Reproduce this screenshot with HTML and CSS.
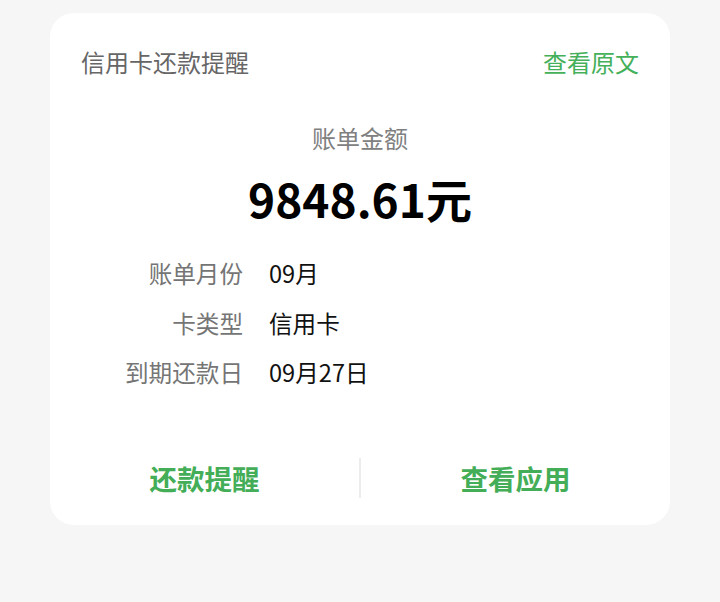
FILE: index.html
```html
<!DOCTYPE html>
<html lang="zh">
<head>
<meta charset="utf-8">
<link rel="stylesheet" href="styles.css">
</head>
<body>
<div class="card">
  <div class="header">
    <span class="title">信用卡还款提醒</span>
    <span class="link">查看原文</span>
  </div>
  <div class="sub">账单金额</div>
  <div class="amount">9848.61元</div>
  <div class="rows">
    <span class="label">账单月份</span><span class="value">09月</span>
    <span class="label">卡类型</span><span class="value">信用卡</span>
    <span class="label">到期还款日</span><span class="value">09月27日</span>
  </div>
  <div class="actions">
    <div class="btn">还款提醒</div>
    <div class="divider"></div>
    <div class="btn">查看应用</div>
  </div>
</div>
</body>
</html>
```

FILE: styles.css
```css
html, body {
  margin: 0;
  padding: 0;
  background: #f6f6f6;
  font-family: "Noto Sans CJK SC", "Noto Sans", sans-serif;
}
body {
  padding-top: 13px;
}
.card {
  margin: 0 50px;
  height: 512px;
  box-sizing: border-box;
  background: #ffffff;
  border-radius: 24px;
  padding-top: 33px;
  display: flex;
  flex-direction: column;
}
.header {
  display: flex;
  justify-content: space-between;
  align-items: center;
  padding: 0 31px;
  height: 32px;
  font-size: 24px;
  line-height: 32px;
}
.title { color: #666666; }
.link { color: #45b05a; }
.sub {
  margin-top: 44px;
  text-align: center;
  font-size: 24px;
  line-height: 32px;
  color: #808080;
}
.amount {
  margin-top: 16px;
  text-align: center;
  font-size: 46px;
  line-height: 56px;
  font-weight: 700;
  color: #000000;
}
.rows {
  margin-top: 23px;
  display: grid;
  grid-template-columns: 193px 1fr;
  column-gap: 26px;
  font-size: 23.6px;
  line-height: 49.5px;
}
.label { text-align: right; color: #757575; }
.value { color: #111111; }
.actions {
  margin-top: auto;
  margin-bottom: 7px;
  height: 80px;
  display: flex;
  align-items: center;
}
.btn {
  flex: 1;
  text-align: center;
  font-size: 27.5px;
  font-weight: 700;
  color: #43ad57;
}
.divider {
  width: 2px;
  height: 40px;
  background: #ececec;
}
```
